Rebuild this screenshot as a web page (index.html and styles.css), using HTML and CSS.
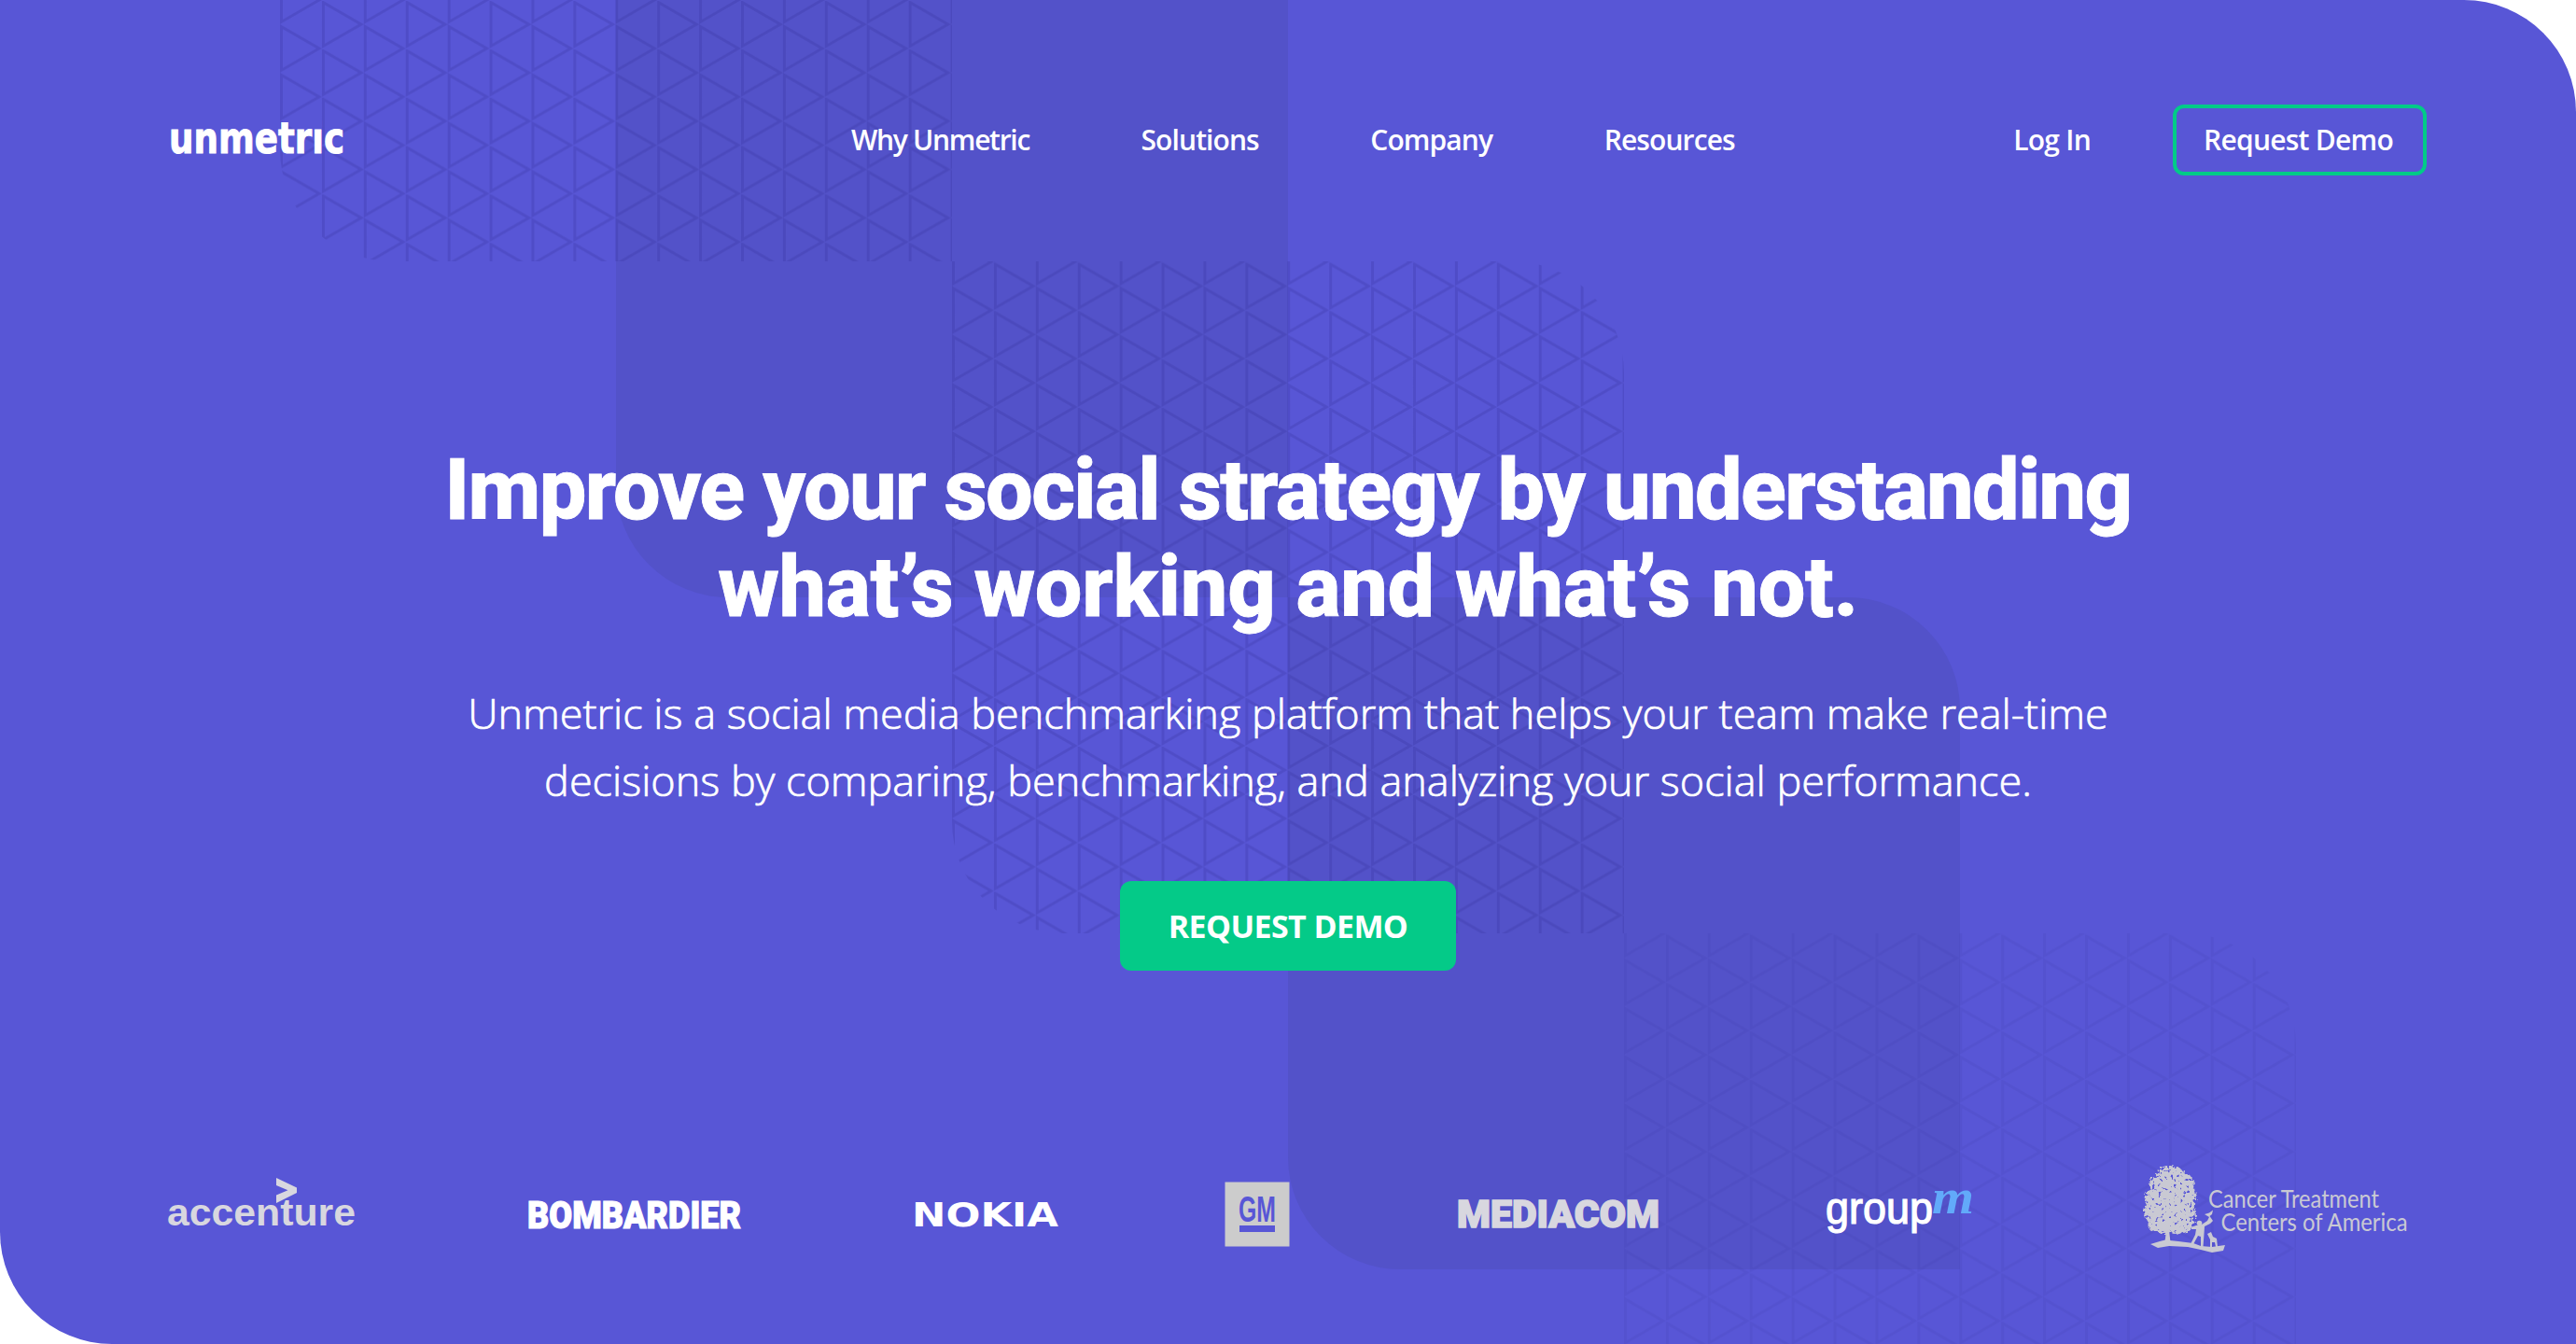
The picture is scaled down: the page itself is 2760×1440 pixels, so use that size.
FILE: index.html
```html
<!DOCTYPE html>
<html lang="en">
<head>
<meta charset="utf-8">
<title>Unmetric</title>
<link rel="stylesheet" href="styles.css">
</head>
<body>
<div class="hero">
  <svg class="backdrop" viewBox="0 0 2760 1440" aria-hidden="true">
    <defs>
      <pattern id="mesh-a" x="300" y="0" width="89.82" height="51.85" patternUnits="userSpaceOnUse">
        <path class="mesh" d="M1.5 28.5V75.3L42 51.9ZM1.5 -23.4V23.4L42 0ZM46.4 2.6V49.3L87 26Z"/>
      </pattern>
      <pattern id="mesh-b" x="1020" y="280.5" width="89.82" height="51.85" patternUnits="userSpaceOnUse">
        <path class="mesh" d="M1.5 28.5V75.3L42 51.9ZM1.5 -23.4V23.4L42 0ZM46.4 2.6V49.3L87 26Z"/>
      </pattern>
      <pattern id="mesh-c" x="1740" y="1000.5" width="89.82" height="51.85" patternUnits="userSpaceOnUse">
        <path class="mesh" d="M1.5 28.5V75.3L42 51.9ZM1.5 -23.4V23.4L42 0ZM46.4 2.6V49.3L87 26Z"/>
      </pattern>
    </defs>
    <path class="shade" d="M660 0H1380V640H780A120 120 0 0 1 660 520Z"/>
    <path class="shade" d="M1380 640H1980A120 120 0 0 1 2100 760V1360H1500A120 120 0 0 1 1380 1240Z"/>
    <path fill="url(#mesh-a)" d="M300 0H1020V280H420A120 120 0 0 1 300 160Z"/>
    <path fill="url(#mesh-b)" d="M1020 280H1620A120 120 0 0 1 1740 400V1000H1140A120 120 0 0 1 1020 880Z"/>
    <path fill="url(#mesh-c)" opacity=".45" d="M1740 1000H2340A120 120 0 0 1 2460 1120V1440H1740Z"/>
  </svg>

  <header class="topbar">
    <a class="brand" href="#" aria-label="unmetric">
      <svg width="190" height="40" viewBox="0 0 190 40">
        <defs><clipPath id="dotless"><path d="M0 0H149V9H164V0H190V40H0Z"/></clipPath></defs>
        <text class="brand-word" x="0" y="35" textLength="188" lengthAdjust="spacingAndGlyphs" clip-path="url(#dotless)">unmetric</text>
      </svg>
    </a>
    <nav class="menu">
      <a class="menu-first" href="#">Why Unmetric</a>
      <a href="#">Solutions</a>
      <a href="#">Company</a>
      <a href="#">Resources</a>
    </nav>
    <div class="account">
      <a href="#">Log In</a>
      <a class="demo-link" href="#">Request Demo</a>
    </div>
  </header>

  <main class="pitch">
    <h1><span class="h-one">Improve your social strategy by understanding</span><br><span class="h-two">what’s working and what’s not.</span></h1>
    <p>Unmetric is a social media benchmarking platform that helps your team make real-time<br>decisions by comparing, benchmarking, and analyzing your social performance.</p>
    <a class="cta" href="#">REQUEST DEMO</a>
  </main>

  <footer class="clients">
    <svg width="206" height="100" viewBox="0 0 206 100">
      <path fill="#d8d7df" d="M116 16L138 26.5V32L116 43V34.5L128.500 29.300L116 24Z"/>
      <text class="l-accenture" x="-1" y="67" textLength="202" lengthAdjust="spacingAndGlyphs">accenture</text>
    </svg>
    <svg width="234" height="100" viewBox="0 0 234 100">
      <text class="l-heavy" x="-1" y="69.500" textLength="229" lengthAdjust="spacingAndGlyphs">BOMBARDIER</text>
    </svg>
    <svg width="152" height="100" viewBox="0 0 152 100">
      <text class="l-nokia" x="-3" y="68" textLength="157" lengthAdjust="spacingAndGlyphs">NOKIA</text>
    </svg>
    <svg width="70" height="100" viewBox="0 0 70 100">
      <rect x="0.500" y="20.500" width="69" height="69" fill="#ccc"/>
      <text class="l-gm" x="15" y="63" textLength="40" lengthAdjust="spacingAndGlyphs">GM</text>
      <rect x="16" y="67" width="38" height="7" fill="#5856d6"/>
    </svg>
    <svg width="215" height="100" viewBox="0 0 215 100">
      <text class="l-heavy l-soft" x="-1" y="68.500" textLength="217" lengthAdjust="spacingAndGlyphs">MEDIACOM</text>
    </svg>
    <svg width="157" height="100" viewBox="0 0 157 100">
      <text class="l-group" x="-1" y="65" textLength="115" lengthAdjust="spacingAndGlyphs">group</text>
      <text class="l-m" x="113" y="54" textLength="45" lengthAdjust="spacingAndGlyphs">m</text>
    </svg>
    <svg width="286" height="100" viewBox="0 0 286 100">
      <defs>
        <filter id="leaves" x="-10%" y="-10%" width="120%" height="120%">
          <feTurbulence type="fractalNoise" baseFrequency=".3" numOctaves="2" seed="4" result="n"/>
          <feDisplacementMap in="SourceGraphic" in2="n" scale="9" result="d"/>
          <feColorMatrix in="n" type="matrix" values="0 0 0 0 0  0 0 0 0 0  0 0 0 0 0  9 0 0 0 -2.500" result="h"/>
          <feComposite in="d" in2="h" operator="in"/>
        </filter>
      </defs>
      <g fill="#c9c9d3">
        <path filter="url(#leaves)" transform="translate(2 0)" d="M23 5C31 1 41 4 43 10C52 12 57 19 54 27C59 34 56 41 54 45C59 53 57 60 52 66C54 71 48 76 42 74C38 78 32 77 30 73C24 78 19 76 16 73C8 75 4 70 6 63C0 58 0 50 4 45C-1 37 3 31 8 29C5 22 8 15 15 14C16 9 19 6 23 5Z"/>
        <path d="M26.500 35H30V72L31.500 85H25.500L27 72Z"/>
        <path d="M10 87L20 84L26 82.500L40 84L56 86L64 89L76 90L90 88L88 94L76 96L64 93L50 90L30 89L18 91Z"/>
        <circle cx="62.500" cy="64.500" r="2.800"/>
        <path d="M59 67L65 66L71 62L73 58L68 55L73 53.500L77 50.500L76 55L73.500 57L77 62L74 65L68 68L67.500 76L66.500 90H64L64 79L61 78L55 89L53 87L58 77L59 71L54 71L53 69Z"/>
        <path d="M71 76L75 74L77 79L81 81L82 90L80 90L79 85L76 85V90H74V82Z"/>
      </g>
      <text class="l-ctca" x="72" y="48" textLength="183" lengthAdjust="spacingAndGlyphs">Cancer Treatment</text>
      <text class="l-ctca" x="85.500" y="72.500" textLength="200" lengthAdjust="spacingAndGlyphs">Centers of America</text>
    </svg>
  </footer>
</div>
</body>
</html>
```
FILE: styles.css
```css
* { box-sizing: border-box; }

body {
  margin: 0;
  background: #fff;
  color: #fff;
  font-family: "Open Sans", "Liberation Sans", sans-serif;
}

a { color: inherit; text-decoration: none; }

.hero {
  position: relative;
  display: flex;
  flex-direction: column;
  width: 2760px;
  height: 1440px;
  border-radius: 0 120px 0 120px;
  background: #5856d6;
  overflow: hidden;
}

.backdrop { position: absolute; inset: 0; width: 2760px; height: 1440px; }
.shade { fill: #5352c9; }
.mesh { fill: none; stroke: rgba(50, 45, 150, .24); stroke-width: 3; }

.topbar {
  position: relative;
  display: grid;
  grid-template-columns: 731px 1fr auto;
  align-items: center;
  height: 76px;
  margin: 112px 160px 0 181px;
  font-size: 30px;
  font-weight: 550;
  letter-spacing: -.75px;
  white-space: nowrap;
}

.brand { display: block; height: 40px; margin-top: -2px; }
.brand svg { display: block; }
.brand-word {
  font: 700 47px "DejaVu Sans", sans-serif;
  fill: #fff;
  stroke: #fff;
  stroke-width: 1px;
  letter-spacing: 0;
}

.menu { display: flex; gap: 119.5px; letter-spacing: -.9px; padding-bottom: 2px; }
.menu-first { letter-spacing: -1.3px; }
.account { display: flex; align-items: center; gap: 88px; }
.account a { padding-bottom: 2px; }

.account .demo-link {
  display: flex;
  align-items: center;
  justify-content: center;
  width: 272px;
  height: 76px;
  padding-right: 3px;
  border: 4px solid #00cb88;
  border-radius: 12px;
}

.pitch {
  position: relative;
  display: flex;
  flex-direction: column;
  align-items: center;
  margin-top: 286px;
  text-align: center;
  white-space: nowrap;
}

h1 {
  margin: 0;
  font: 800 90px/104px Roboto, "Liberation Sans", sans-serif;
  -webkit-text-stroke: .8px #fff;
}
.h-one { letter-spacing: -1.65px; }
.h-two { letter-spacing: -.3px; }

.pitch p {
  margin: 46px 0 72px;
  font-size: 45px;
  line-height: 72px;
  font-weight: 300;
  -webkit-text-stroke: .7px #fff;
}

.cta {
  display: flex;
  align-items: center;
  justify-content: center;
  width: 360px;
  height: 96px;
  border-radius: 12px;
  background: #04ca88;
  font-size: 34px;
  font-weight: 700;
  letter-spacing: -.6px;
}

.clients {
  position: relative;
  display: flex;
  gap: 180px;
  margin: 206px 0 0 180px;
}
.clients svg { display: block; flex: none; overflow: visible; }

.l-accenture { font: 700 41px "Liberation Sans", sans-serif; fill: #d8d7df; }
.l-heavy { font: 900 41.500px Roboto, sans-serif; fill: #fff; stroke: #fff; stroke-width: 1.2px; }
.l-soft { fill: #d8d7df; stroke: #d8d7df; stroke-width: 1.6px; }
.l-nokia { font: 700 35.500px "DejaVu Sans", sans-serif; fill: #fff; }
.l-gm { font: 700 38px "Liberation Sans", sans-serif; fill: #5856d6; }
.l-group { font: 400 48px "Liberation Sans", sans-serif; fill: #fff; stroke: #fff; stroke-width: 1.2px; }
.l-m { font: italic 700 52px "Liberation Serif", serif; fill: #62aafa; }
.l-ctca { font: 400 27.500px Lato, sans-serif; fill: #c9c9d3; }
```
